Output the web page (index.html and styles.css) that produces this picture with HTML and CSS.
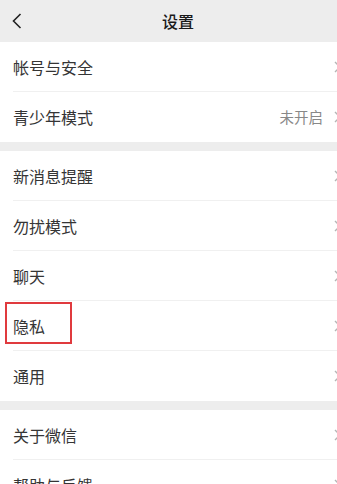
FILE: index.html
```html
<!DOCTYPE html>
<html lang="zh-CN">
<head>
<meta charset="utf-8">
<title>设置</title>
<link rel="stylesheet" href="styles.css">
</head>
<body>
<div class="page">
  <header class="topbar">
    <span class="back">
      <svg width="10" height="16" viewBox="0 0 10 16"><polyline points="8.5,1 1.5,8 8.5,15" fill="none" stroke="#222" stroke-width="1.6" stroke-linejoin="miter"/></svg>
    </span>
    <h1 class="title">设置</h1>
    <span></span>
  </header>

  <section class="group">
    <div class="row"><div class="row-inner"><span class="label">帐号与安全</span><span class="chev"><svg width="7" height="12" viewBox="0 0 7 12"><polyline points="1,1 6,6 1,11" fill="none" stroke="#b5b5b5" stroke-width="1.4"/></svg></span></div></div>
    <div class="row"><div class="row-inner"><span class="label">青少年模式</span><span class="value">未开启</span><span class="chev"><svg width="7" height="12" viewBox="0 0 7 12"><polyline points="1,1 6,6 1,11" fill="none" stroke="#b5b5b5" stroke-width="1.4"/></svg></span></div></div>
  </section>

  <section class="group">
    <div class="row"><div class="row-inner"><span class="label">新消息提醒</span><span class="chev"><svg width="7" height="12" viewBox="0 0 7 12"><polyline points="1,1 6,6 1,11" fill="none" stroke="#b5b5b5" stroke-width="1.4"/></svg></span></div></div>
    <div class="row"><div class="row-inner"><span class="label">勿扰模式</span><span class="chev"><svg width="7" height="12" viewBox="0 0 7 12"><polyline points="1,1 6,6 1,11" fill="none" stroke="#b5b5b5" stroke-width="1.4"/></svg></span></div></div>
    <div class="row"><div class="row-inner"><span class="label">聊天</span><span class="chev"><svg width="7" height="12" viewBox="0 0 7 12"><polyline points="1,1 6,6 1,11" fill="none" stroke="#b5b5b5" stroke-width="1.4"/></svg></span></div></div>
    <div class="row row-marked"><div class="row-inner"><span class="label">隐私</span><span class="chev"><svg width="7" height="12" viewBox="0 0 7 12"><polyline points="1,1 6,6 1,11" fill="none" stroke="#b5b5b5" stroke-width="1.4"/></svg></span></div><span class="highlight"></span></div>
    <div class="row"><div class="row-inner"><span class="label">通用</span><span class="chev"><svg width="7" height="12" viewBox="0 0 7 12"><polyline points="1,1 6,6 1,11" fill="none" stroke="#b5b5b5" stroke-width="1.4"/></svg></span></div></div>
  </section>

  <section class="group">
    <div class="row"><div class="row-inner"><span class="label">关于微信</span><span class="chev"><svg width="7" height="12" viewBox="0 0 7 12"><polyline points="1,1 6,6 1,11" fill="none" stroke="#b5b5b5" stroke-width="1.4"/></svg></span></div></div>
    <div class="row"><div class="row-inner"><span class="label">帮助与反馈</span><span class="chev"><svg width="7" height="12" viewBox="0 0 7 12"><polyline points="1,1 6,6 1,11" fill="none" stroke="#b5b5b5" stroke-width="1.4"/></svg></span></div></div>
  </section>
</div>
</body>
</html>
```

FILE: styles.css
```css
html, body {
  margin: 0;
  padding: 0;
  overflow: hidden;
  background: #ededed;
}

.page {
  width: 356px;
  font-family: "Noto Sans CJK SC", "Noto Sans", sans-serif;
  background: #ededed;
}

.topbar {
  height: 42px;
  display: grid;
  grid-template-columns: 1fr auto 1fr;
  align-items: center;
  background: #ededed;
}

.back {
  display: flex;
  align-items: center;
  padding-left: 12px;
  height: 16px;
  margin-top: -1px;
}

.title {
  margin: 0;
  font-size: 16px;
  font-weight: 500;
  color: #1a1a1a;
  line-height: 1;
}

.group {
  background: #fff;
  margin-bottom: 9px;
}

.row {
  position: relative;
  padding-left: 13px;
}

.row-inner {
  height: 50px;
  display: flex;
  align-items: center;
  border-bottom: 1px solid #f0f0f0;
  box-sizing: border-box;
  padding-right: 15px;
}

.row:last-child .row-inner {
  border-bottom: none;
}

.label {
  flex: 1;
  font-size: 16px;
  color: #353535;
  line-height: 1;
}

.value {
  font-size: 14.5px;
  color: #888;
  margin-right: 11px;
  line-height: 1;
}

.chev {
  display: flex;
  align-items: center;
}

.highlight {
  position: absolute;
  left: 5px;
  top: 1px;
  width: 63px;
  height: 38px;
  border: 2px solid #e03a3e;
}
```
